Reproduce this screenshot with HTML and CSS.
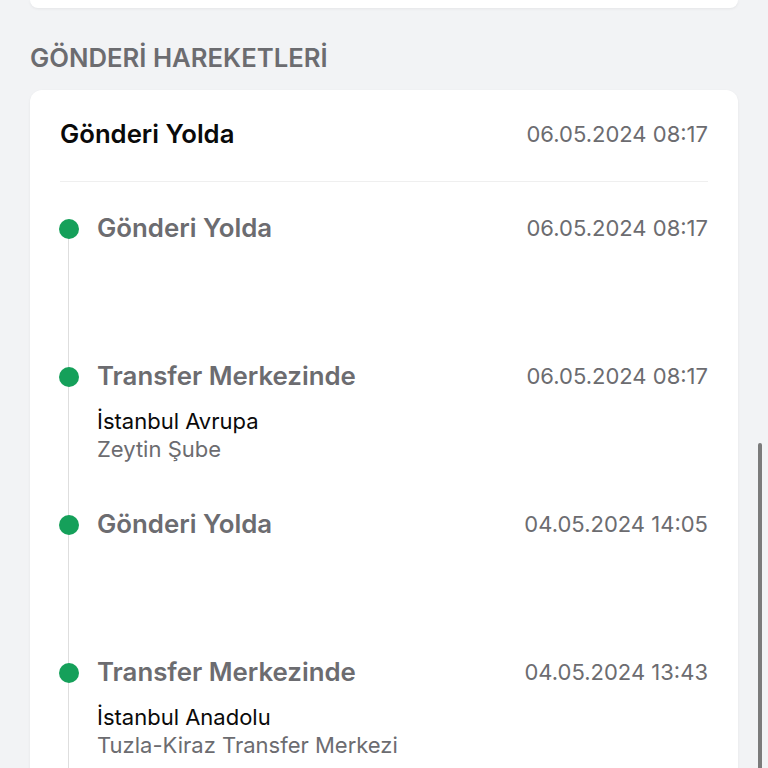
FILE: index.html
```html
<!doctype html>
<html lang="tr">
<head>
  <meta charset="utf-8" />
  <meta name="viewport" content="width=device-width,initial-scale=1" />
  <title>Gönderi Hareketleri</title>
  <link rel="stylesheet" href="styles.css">
</head>
<body>
  <div class="page">
    <div class="card card-top"></div>

    <h3 class="section-title">GÖNDERİ HAREKETLERİ</h3>

    <section class="card moves">
      <div class="moves-head">
        <span class="head-title">Gönderi Yolda</span>
        <span class="date">06.05.2024 08:17</span>
      </div>

      <ul class="timeline">
        <li class="step">
          <span class="dot"></span>
          <div class="step-body">
            <div class="step-row">
              <span class="step-title">Gönderi Yolda</span>
              <span class="date">06.05.2024 08:17</span>
            </div>
          </div>
        </li>
        <li class="step">
          <span class="dot"></span>
          <div class="step-body">
            <div class="step-row">
              <span class="step-title">Transfer Merkezinde</span>
              <span class="date">06.05.2024 08:17</span>
            </div>
            <div class="place">İstanbul Avrupa</div>
            <div class="branch">Zeytin Şube</div>
          </div>
        </li>
        <li class="step">
          <span class="dot"></span>
          <div class="step-body">
            <div class="step-row">
              <span class="step-title">Gönderi Yolda</span>
              <span class="date">04.05.2024 14:05</span>
            </div>
          </div>
        </li>
        <li class="step">
          <span class="dot"></span>
          <div class="step-body">
            <div class="step-row">
              <span class="step-title">Transfer Merkezinde</span>
              <span class="date">04.05.2024 13:43</span>
            </div>
            <div class="place">İstanbul Anadolu</div>
            <div class="branch">Tuzla-Kiraz Transfer Merkezi</div>
          </div>
        </li>
      </ul>
    </section>
  </div>
  <div class="scrollbar"></div>
</body>
</html>
```

FILE: styles.css
```css
:root{
  --bg:#f2f3f5;
  --card:#ffffff;
  --text:#0a0a0a;
  --muted:#6c6c70;
  --green:#15a05a;
  --line:#dedede;
}
html,body{margin:0;height:100%;overflow:hidden;}
body{background:var(--bg);font-family:Inter,"Noto Sans",Arial,sans-serif;color:var(--text);}
.page{padding:0 30px;}
.card{background:var(--card);border-radius:12px;box-shadow:0 1px 3px rgba(0,0,0,0.06);}
.card-top{height:8px;border-radius:0 0 12px 12px;}
.section-title{margin:30px 0 0;height:52px;font-size:25.7px;font-weight:600;color:var(--muted);line-height:40px;}
.moves{padding:0 30px;}
.moves-head{display:flex;justify-content:space-between;align-items:center;padding:30px 0 33px;border-bottom:1px solid #efefef;}
.head-title{font-size:25.7px;font-weight:600;line-height:28px;}
.date{font-size:22px;color:var(--muted);line-height:28px;}
.timeline{list-style:none;margin:0;padding:32px 0 0;position:relative;}
.timeline::before{content:"";position:absolute;left:8px;top:48px;bottom:0;width:1px;background:var(--line);}
.step{display:flex;min-height:148px;position:relative;}
.dot{flex:none;width:20px;height:20px;border-radius:50%;background:var(--green);margin-top:5px;position:relative;left:-1px;}
.step-body{flex:1;margin-left:17px;}
.step-row{display:flex;justify-content:space-between;align-items:center;}
.step-title{font-size:25.8px;font-weight:600;color:var(--muted);line-height:28px;}
.place{margin-top:17px;font-size:22px;line-height:28px;color:var(--text);}
.branch{font-size:22px;line-height:28px;color:var(--muted);}
.scrollbar{position:fixed;right:6px;top:443px;width:4px;height:340px;border-radius:2px;background:#7b7b7b;}
```
